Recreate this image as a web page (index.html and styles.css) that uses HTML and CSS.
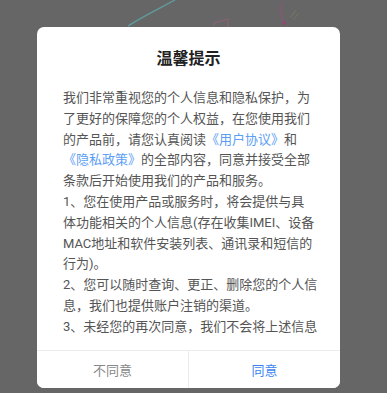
FILE: index.html
```html
<!DOCTYPE html>
<html lang="zh-CN">
<head>
<meta charset="utf-8">
<title>温馨提示</title>
<link rel="stylesheet" href="styles.css">
</head>
<body>
<svg class="backdrop" width="387" height="40" viewBox="0 0 387 40" aria-hidden="true">
  <path d="M128 26 C 140 18, 160 8, 175 0" fill="none" stroke="#5f9c9e" stroke-width="1.4"/>
  <path d="M214 26 L214 23 L228 19 L228 27" fill="none" stroke="#8a6275" stroke-width="1.2"/>
  <path d="M281 3 C 284 6, 277 9, 281 13 C 285 17, 279 19, 284 22" fill="none" stroke="#8a5674" stroke-width="1.4"/>
  <circle cx="284" cy="23" r="2.2" fill="#8a4f70"/>
  <path d="M290 18 L296 10 M293 20 L299 13" stroke="#7d7a66" stroke-width="0.8"/>
</svg>
<div class="dialog">
  <h1 class="title">温馨提示</h1>
  <div class="content">
    <p>我们非常重视您的个人信息和隐私保护，为了更好的保障您的个人权益，在您使用我们的产品前，请您认真阅读<a class="link" href="#">《用户协议》</a>和<a class="link" href="#">《隐私政策》</a>的全部内容，同意并接受全部条款后开始使用我们的产品和服务。</p>
    <p class="item-narrow">1、您在使用产品或服务时，将会提供与具体功能相关的个人信息(存在收集IMEI、设备MAC地址和软件安装列表、通讯录和短信的行为)。</p>
    <p>2、您可以随时查询、更正、删除您的个人信息，我们也提供账户注销的渠道。</p>
    <p>3、未经您的再次同意，我们不会将上述信息用于您未授权的其他用途或目的。</p>
  </div>
  <div class="actions">
    <button class="btn btn-cancel">不同意</button>
    <button class="btn btn-ok">同意</button>
  </div>
</div>
</body>
</html>
```

FILE: styles.css
```css
html, body {
  margin: 0;
  padding: 0;
}
body {
  width: 387px;
  height: 393px;
  background: #666666;
  overflow: hidden;
  position: relative;
  font-family: Roboto, "Noto Sans CJK SC", sans-serif;
}
.backdrop {
  position: absolute;
  left: 0;
  top: 0;
}
.dialog {
  position: relative;
  margin: 27px 0 0 37px;
  width: 303px;
  height: 361px;
  background: #ffffff;
  border-radius: 7px;
  display: flex;
  flex-direction: column;
  overflow: hidden;
}
.title {
  margin: 22px 0 0;
  font-size: 16px;
  line-height: 20px;
  font-weight: 700;
  color: #222222;
  text-align: center;
}
.content {
  margin: 19px 22px 0 26px;
  height: 250px;
  overflow: hidden;
  font-size: 13px;
  line-height: 20.8px;
  color: #555555;
}
.content p {
  margin: 0;
}
.content .item-narrow {
  padding-right: 2px;
}
.link {
  color: #5b9ef5;
  text-decoration: none;
}
.actions {
  margin-top: auto;
  height: 37px;
  border-top: 1px solid #ececec;
  display: flex;
}
.btn {
  flex: 1;
  border: 0;
  background: #ffffff;
  font-family: inherit;
  font-size: 13px;
  padding: 0;
  margin: 0;
}
.btn-cancel {
  color: #888888;
  border-right: 1px solid #ececec;
}
.btn-ok {
  color: #3d86f0;
}
```
